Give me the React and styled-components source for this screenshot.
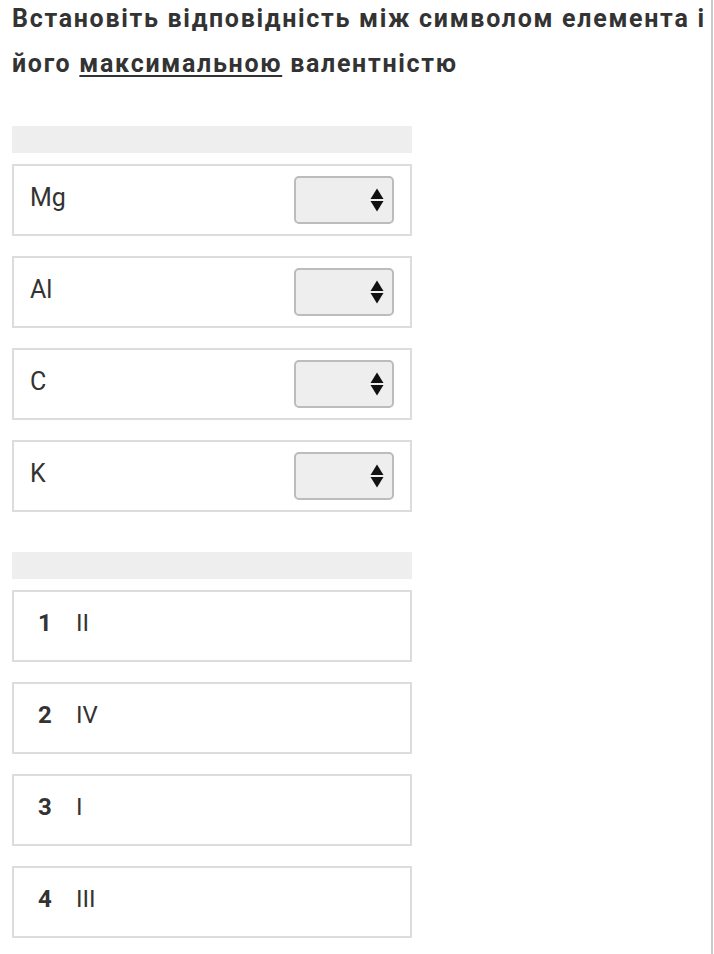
import styled, { createGlobalStyle } from "styled-components";

const GlobalStyle = createGlobalStyle`
  html, body {
    margin: 0;
    padding: 0;
    background: #fff;
  }
  body {
    font-family: Roboto, "Liberation Sans", sans-serif;
    color: #333;
  }
`;

const Page = styled.div`
  box-sizing: border-box;
  width: 713px;
  min-height: 954px;
  padding: 0 0 16px 12px;
  border-right: 2px solid #cacaca;
  overflow: hidden;
`;

const Title = styled.h2`
  margin: -4px 0 0;
  width: 699px;
  font-size: 25px;
  font-weight: 700;
  line-height: 45px;
  letter-spacing: 1.7px;
  color: #333;
`;

const Underlined = styled.span`
  text-decoration: underline;
  text-underline-offset: 3px;
  text-decoration-thickness: 2px;
`;

const Section = styled.section`
  width: 400px;
  margin-top: ${(p) => p.$top}px;
`;

const HeaderBar = styled.div`
  height: 27px;
  background: #eeeeee;
  margin-bottom: 11px;
`;

const List = styled.div`
  display: flex;
  flex-direction: column;
  gap: 20px;
`;

const Row = styled.div`
  box-sizing: border-box;
  height: 72px;
  border: 2px solid #dcdcdc;
  display: flex;
  align-items: center;
  justify-content: space-between;
  padding: 0 16px 0 ${(p) => p.$pad}px;
  font-size: 25px;
  color: #333;
`;

const Symbol = styled.span`
  line-height: 1;
  margin-top: -5px;
`;

const SelectBox = styled.div`
  box-sizing: border-box;
  width: 100px;
  height: 48px;
  border: 2px solid #bcbcbc;
  border-radius: 5px;
  background: #eeeeee;
  display: flex;
  align-items: center;
  justify-content: flex-end;
  padding-right: 8px;
`;

const Answer = styled.div`
  display: flex;
  align-items: center;
  gap: 24px;
  line-height: 1;
  margin-top: -6px;
`;

const Num = styled.span`
  font-weight: 700;
  font-size: 24px;
  min-width: 14px;
`;

const Value = styled.span`
  font-size: 24px;
`;

const Arrows = () => (
  <svg width="14" height="24" viewBox="0 0 14 24">
    <path d="M7 0.5 L13.5 11 L0.5 11 Z" fill="#111" strokeLinejoin="round" />
    <path d="M7 23.5 L13.5 13 L0.5 13 Z" fill="#111" strokeLinejoin="round" />
  </svg>
);

const elements = ["Mg", "Al", "C", "K"];
const answers = [
  ["1", "II"],
  ["2", "IV"],
  ["3", "I"],
  ["4", "III"],
];

const App = () => {
  return (
    <>
      <GlobalStyle />
      <Page>
        <Title>
          Встановіть відповідність між символом елемента і його{" "}
          <Underlined>максимальною</Underlined> валентністю
        </Title>
        <Section $top={40}>
          <HeaderBar />
          <List>
            {elements.map((el) => (
              <Row key={el} $pad={16}>
                <Symbol>{el}</Symbol>
                <SelectBox>
                  <Arrows />
                </SelectBox>
              </Row>
            ))}
          </List>
        </Section>
        <Section $top={40}>
          <HeaderBar />
          <List>
            {answers.map(([n, v]) => (
              <Row key={n} $pad={24}>
                <Answer>
                  <Num>{n}</Num>
                  <Value>{v}</Value>
                </Answer>
              </Row>
            ))}
          </List>
        </Section>
      </Page>
    </>
  );
};

export default App;
